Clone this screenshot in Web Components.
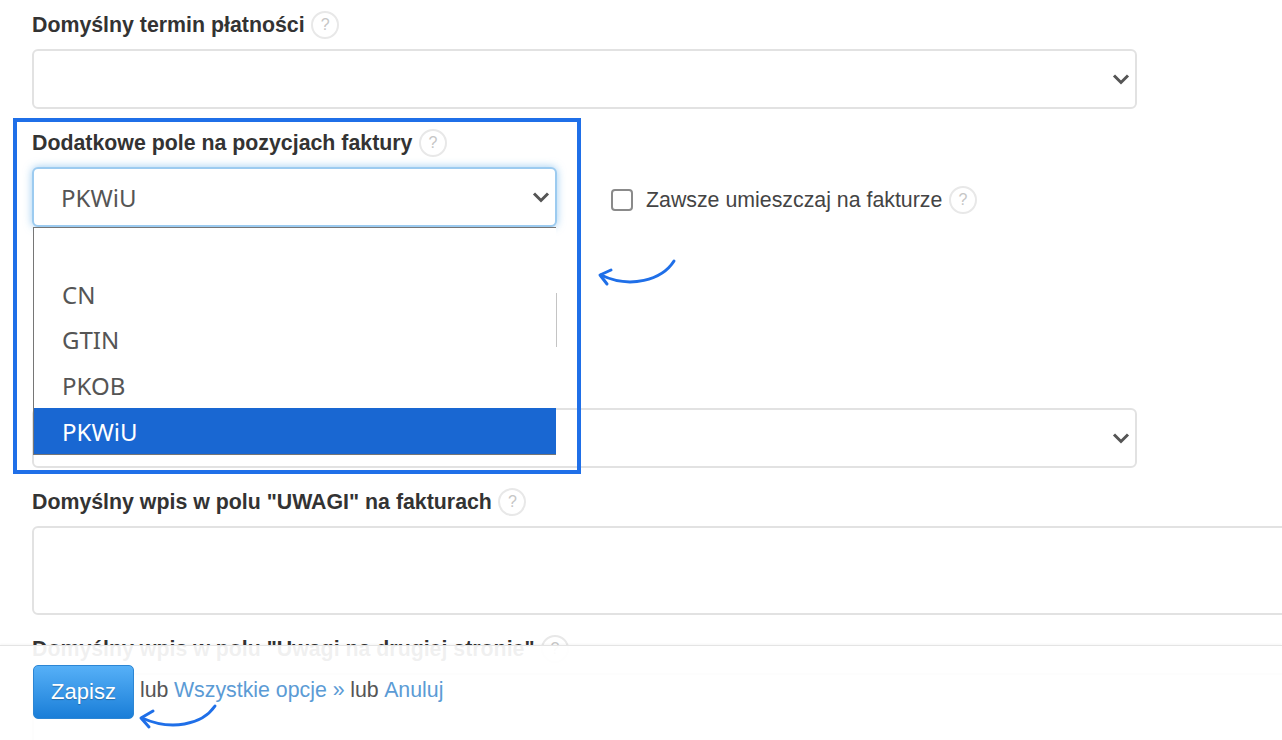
<!DOCTYPE html>
<html lang="pl">
<head>
  <meta charset="UTF-8">
  <title>Ustawienia faktury</title>
  <style>
    html, body {
      margin: 0;
      height: 740px;
      overflow: hidden;
      background: #fff;
      font-family: "Liberation Sans", Arial, sans-serif;
      color: #333;
    }
  </style>
</head>
<body>
  <settings-page></settings-page>

  <template id="page-tpl">
    <style>
      :host {
        display: block;
        position: relative;
        height: 740px;
        overflow: hidden;
      }
      .form {
        display: flex;
        flex-direction: column;
        gap: 22px;
        padding: 13px 0 0 32px;
      }
      .row {
        display: flex;
        align-items: flex-end;
      }
      .option {
        display: flex;
        align-items: center;
        margin: 0 0 13px 54px;
      }
      .spaced { margin-top: 159px; }
      .option-box {
        width: 18px;
        height: 18px;
        border: 2px solid #8a8a8a;
        border-radius: 4px;
        margin-right: 13px;
      }
      .option-text {
        font-size: 21.33px;
        color: #444;
      }
      .frame {
        position: absolute;
        left: 13px;
        top: 118px;
        width: 560px;
        height: 348px;
        border: 4px solid #1f6fe8;
      }
      .arrow {
        position: absolute;
        fill: none;
        stroke: #1f6fe8;
        stroke-width: 3;
        stroke-linecap: round;
        stroke-linejoin: round;
      }
      .arrow-a { left: 595px; top: 255px; }
      .arrow-b { left: 136px; top: 700px; }
    </style>
    <div class="form">
      <form-field label="Domyślny termin płatności" style="width:1105px">
        <select-box></select-box>
      </form-field>
      <div class="row">
        <form-field label="Dodatkowe pole na pozycjach faktury" style="width:525px">
          <select-box value="PKWiU" focused></select-box>
        </form-field>
        <div class="option">
          <span class="option-box"></span>
          <span class="option-text">Zawsze umieszczaj na fakturze</span>
          <help-mark></help-mark>
        </div>
      </div>
      <form-field class="spaced" style="width:1105px">
        <select-box></select-box>
      </form-field>
      <form-field label="Domyślny wpis w polu &quot;UWAGI&quot; na fakturach" style="width:1300px">
        <text-box></text-box>
      </form-field>
      <form-field label="Domyślny wpis w polu &quot;Uwagi na drugiej stronie&quot;" style="width:1300px">
        <text-box></text-box>
      </form-field>
    </div>

    <option-list></option-list>
    <div class="frame"></div>
    <save-bar></save-bar>

    <svg class="arrow arrow-a" width="84" height="36" viewBox="0 0 84 36">
      <path d="M79 6C67 25 35 34 6 20"/>
      <path d="M16 15L5 20L12 29"/>
    </svg>
    <svg class="arrow arrow-b" width="84" height="32" viewBox="0 0 84 32">
      <path d="M79 6C66 25 35 31 6 18"/>
      <path d="M17 11L5 18L13 27"/>
    </svg>
  </template>

  <template id="field-tpl">
    <style>
      :host { display: block; }
      .label {
        display: flex;
        align-items: center;
        height: 24px;
        margin-bottom: 12px;
        font-size: 21.33px;
        font-weight: 700;
        color: #333;
        white-space: nowrap;
      }
      .label.empty { display: none; }
    </style>
    <div class="label"><span class="text"></span><help-mark></help-mark></div>
    <slot></slot>
  </template>

  <template id="help-tpl">
    <style>
      :host {
        display: inline-flex;
        align-items: center;
        justify-content: center;
        box-sizing: border-box;
        width: 28px;
        height: 28px;
        margin-left: 6.5px;
        border: 2px solid #e8e8e8;
        border-radius: 50%;
        font: 400 16px "Liberation Sans", Arial, sans-serif;
        color: #c6c6c6;
        background: #fff;
        flex: none;
      }
    </style>
    ?
  </template>

  <template id="select-tpl">
    <style>
      :host {
        display: flex;
        align-items: center;
        justify-content: space-between;
        box-sizing: border-box;
        height: 60px;
        padding: 0 5px 0 27px;
        border: 2px solid #e2e2e2;
        border-radius: 6px;
        background: #fff;
        font: 400 24px "Noto Sans", "Liberation Sans", sans-serif;
        color: #555;
      }
      :host([focused]) {
        border-color: #9ccbf0;
        box-shadow: 0 0 9px rgba(102, 175, 233, .65);
      }
      svg {
        margin-left: auto;
        fill: none;
        stroke: #555;
        stroke-width: 3;
      }
    </style>
    <span class="value"></span>
    <svg width="18" height="12" viewBox="0 0 18 12"><path d="M2 2.5L9 9.5L16 2.5"/></svg>
  </template>

  <template id="textbox-tpl">
    <style>
      :host {
        display: block;
        box-sizing: border-box;
        height: 89px;
        border: 2px solid #e2e2e2;
        border-radius: 6px;
        background: #fff;
      }
    </style>
  </template>

  <template id="list-tpl">
    <style>
      :host {
        display: block;
        position: absolute;
        left: 33px;
        top: 227px;
        width: 523px;
        height: 228px;
        box-sizing: border-box;
        border-top: 1px solid #767676;
        border-left: 1px solid #767676;
        border-bottom: 2px solid #767676;
        background: #fff;
        font: 400 24px "Noto Sans", "Liberation Sans", sans-serif;
        color: #555;
      }
      .item {
        display: flex;
        align-items: center;
        height: 45.5px;
        padding-left: 28px;
      }
      .item.blank { height: 43.5px; }
      .item.sel {
        height: 46px;
        background: #1967d2;
        color: #fff;
      }
      .track {
        position: absolute;
        right: -1px;
        top: 65px;
        height: 54px;
        border-right: 1px solid #c4c4c4;
      }
    </style>
    <div class="item blank">&nbsp;</div>
    <div class="item">CN</div>
    <div class="item">GTIN</div>
    <div class="item">PKOB</div>
    <div class="item sel">PKWiU</div>
    <div class="track"></div>
  </template>

  <template id="bar-tpl">
    <style>
      :host {
        display: flex;
        align-items: flex-start;
        position: absolute;
        left: 0;
        right: 0;
        top: 645px;
        height: 95px;
        box-sizing: border-box;
        padding: 19px 0 0 33px;
        border-top: 1px solid #e4e4e4;
        box-shadow: 0 -1px 2px rgba(0, 0, 0, .04);
        background: rgba(255, 255, 255, .93);
        font-size: 21.33px;
        color: #555;
      }
      .save {
        display: flex;
        align-items: center;
        justify-content: center;
        box-sizing: border-box;
        width: 101px;
        height: 54px;
        margin-right: 6px;
        border: 1px solid #2c86d4;
        border-radius: 5px;
        background: linear-gradient(#56b0f7, #1a7ed8);
        font-size: 22px;
        color: #fff;
        text-shadow: 0 1px 1px rgba(0, 0, 0, .25);
      }
      .links {
        display: flex;
        gap: 5.5px;
        margin-top: 13px;
        white-space: nowrap;
      }
      .link { color: #5b9bd5; }
    </style>
    <span class="save">Zapisz</span>
    <span class="links">lub <span class="link">Wszystkie opcje »</span> lub <span class="link">Anuluj</span></span>
  </template>

  <script>
    // every element just clones its template into an open shadow root
    function tplElement(tplId) {
      return class extends HTMLElement {
        constructor() {
          super();
          this.attachShadow({ mode: 'open' });
          this.shadowRoot.append(document.getElementById(tplId).content.cloneNode(true));
        }
      };
    }

    class FormField extends tplElement('field-tpl') {
      connectedCallback() {
        const label = this.getAttribute('label');
        this.shadowRoot.querySelector('.text').textContent = label || '';
        if (!label) this.shadowRoot.querySelector('.label').classList.add('empty');
      }
    }

    class SelectBox extends tplElement('select-tpl') {
      connectedCallback() {
        this.shadowRoot.querySelector('.value').textContent = this.getAttribute('value') || '';
      }
    }

    customElements.define('help-mark', tplElement('help-tpl'));
    customElements.define('form-field', FormField);
    customElements.define('select-box', SelectBox);
    customElements.define('text-box', tplElement('textbox-tpl'));
    customElements.define('option-list', tplElement('list-tpl'));
    customElements.define('save-bar', tplElement('bar-tpl'));
    customElements.define('settings-page', tplElement('page-tpl'));
  </script>
</body>
</html>
